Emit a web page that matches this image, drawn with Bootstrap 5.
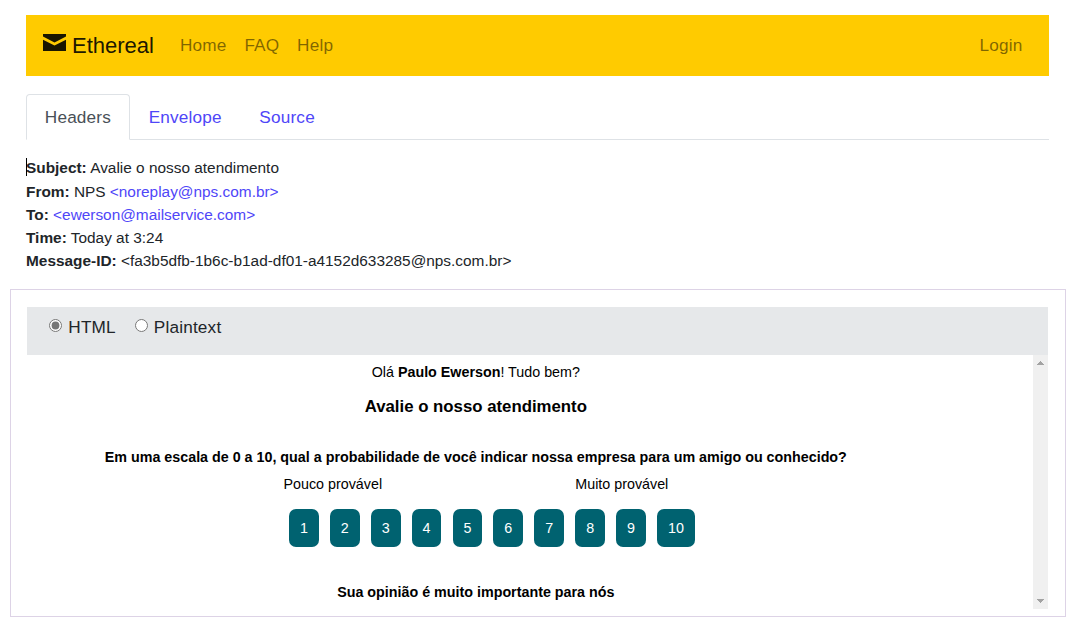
<!DOCTYPE html>
<html lang="pt-BR">
<head>
<meta charset="utf-8">
<meta name="viewport" content="width=device-width, initial-scale=1">
<title>Ethereal</title>
<link href="https://cdn.jsdelivr.net/npm/bootstrap@5.3.0/dist/css/bootstrap.min.css" rel="stylesheet">
<style>
body{font-family:"Liberation Sans",Arial,sans-serif;font-size:17.2px;line-height:26px;color:#212529;background:#fff;height:635px;overflow:hidden}
a{color:#4f46f8;text-decoration:none}
.nav-link,.format-bar label{letter-spacing:.18px}
.page-inner{margin:15px 27px 0 26px}
.topbar{background:#ffcb00;height:61px;padding:0 17.6px 1px 17px;--bs-navbar-nav-link-padding-x:8.9px}
.topbar .navbar-brand{font-size:22px;line-height:33px;color:rgba(0,0,0,.9);margin-right:17.2px;padding:0}
.topbar .navbar-brand svg{width:23px;height:17px;margin:-8px 6px 0 0}
.topbar .nav-link{color:rgba(0,0,0,.5)}
.mail-tabs{margin-top:18px;--bs-nav-tabs-border-radius:4px;border-color:#dee2e6}
.mail-tabs .nav-link{padding:9px 17.8px;height:46px;color:#4f46f8}
.mail-tabs .nav-link.active{color:#495057;border-color:#dee2e6 #dee2e6 #fff}
.mail-head{margin-top:16px;font-size:15.4px;line-height:23.1px}
.mail-head .first-line{position:relative;padding-bottom:.5px}
.text-caret{position:absolute;left:0;top:2px;width:1px;height:18px;background:#000}
.preview{margin:17px 10px 0;height:328px;border:1px solid #ddd3e6;padding:17px 17px 0 16px}
.format-bar{height:48px;background:#e6e8ea;padding:7px 22px}
.format-bar input{width:13px;height:13px;margin:0 6.3px 0 0;position:relative;top:-1.5px;accent-color:#767676}
.format-bar label+label{margin-left:18.7px}
.message{height:254px;color:#000;font-size:14.3px;line-height:17px}
.message-text{width:897.6px;padding-top:9px}
.message-text h1{font-size:16.8px;line-height:19px;font-weight:700;margin:16px 0 33px}
.scale-ends{display:grid;grid-template-columns:99px 93px;column-gap:193px;justify-content:center;margin-top:10px}
.score{background:#006270;color:#fff;border-radius:7px;width:29.8px;height:38px;line-height:38px}
.score:last-child{width:38px}
.score-row{gap:11.1px;margin:16px 0 37px 32.4px}
.scroll-track{width:15px;background:#f0f0f0;padding:6px 4px 6px}
</style>
</head>
<body>
<div class="page-inner">
  <nav class="topbar navbar navbar-expand d-flex align-items-center">
    <a class="navbar-brand" href="#"><svg viewBox="0 0 23 17" fill="#1a1600"><path d="M0 0h23v2.6L11.5 8.4 0 2.6zM0 5.8l11.5 5.8L23 5.8V17H0z"/></svg>Ethereal</a>
    <div class="navbar-nav"><a class="nav-link" href="#">Home</a><a class="nav-link" href="#">FAQ</a><a class="nav-link" href="#">Help</a></div>
    <div class="navbar-nav ms-auto"><a class="nav-link" href="#">Login</a></div>
  </nav>
  <ul class="nav nav-tabs mail-tabs">
    <li class="nav-item"><a class="nav-link active" href="#">Headers</a></li>
    <li class="nav-item"><a class="nav-link" href="#">Envelope</a></li>
    <li class="nav-item"><a class="nav-link" href="#">Source</a></li>
  </ul>
  <div class="mail-head">
    <div class="first-line"><span class="text-caret"></span><b>Subject:</b> Avalie o nosso atendimento</div>
    <div><b>From:</b> NPS <a href="#">&lt;noreplay@nps.com.br&gt;</a></div>
    <div><b>To:</b> <a href="#">&lt;ewerson@mailservice.com&gt;</a></div>
    <div><b>Time:</b> Today at 3:24</div>
    <div><b>Message-ID:</b> &lt;fa3b5dfb-1b6c-b1ad-df01-a4152d633285@nps.com.br&gt;</div>
  </div>
</div>
<section class="preview">
  <div class="format-bar d-flex align-items-start">
    <label class="d-flex align-items-center"><input type="radio" name="format" checked>HTML</label>
    <label class="d-flex align-items-center"><input type="radio" name="format">Plaintext</label>
  </div>
  <div class="message d-flex justify-content-between">
    <div class="message-text text-center">
      <div>Olá <b>Paulo Ewerson</b>! Tudo bem?</div>
      <h1>Avalie o nosso atendimento</h1>
      <div class="fw-bold text-nowrap">Em uma escala de 0 a 10, qual a probabilidade de você indicar nossa empresa para um amigo ou conhecido?</div>
      <div class="scale-ends text-nowrap"><span>Pouco provável</span><span>Muito provável</span></div>
      <div class="score-row d-flex justify-content-center">
        <a class="score" href="#">1</a><a class="score" href="#">2</a><a class="score" href="#">3</a><a class="score" href="#">4</a><a class="score" href="#">5</a><a class="score" href="#">6</a><a class="score" href="#">7</a><a class="score" href="#">8</a><a class="score" href="#">9</a><a class="score" href="#">10</a>
      </div>
      <div class="fw-bold">Sua opinião é muito importante para nós</div>
    </div>
    <div class="scroll-track d-flex flex-column justify-content-between">
      <svg width="7" height="4" fill="#a3a3a3" shape-rendering="crispEdges"><path d="M3 0h1v1h1v1h1v1h1v1H0V3h1V2h1V1h1z"/></svg>
      <svg width="7" height="4" fill="#a3a3a3" shape-rendering="crispEdges"><path d="M0 0h7v1H6v1H5v1H4v1H3V3H2V2H1V1H0z"/></svg>
    </div>
  </div>
</section>
<script src="https://cdn.jsdelivr.net/npm/bootstrap@5.3.0/dist/js/bootstrap.bundle.min.js"></script>
</body>
</html>
